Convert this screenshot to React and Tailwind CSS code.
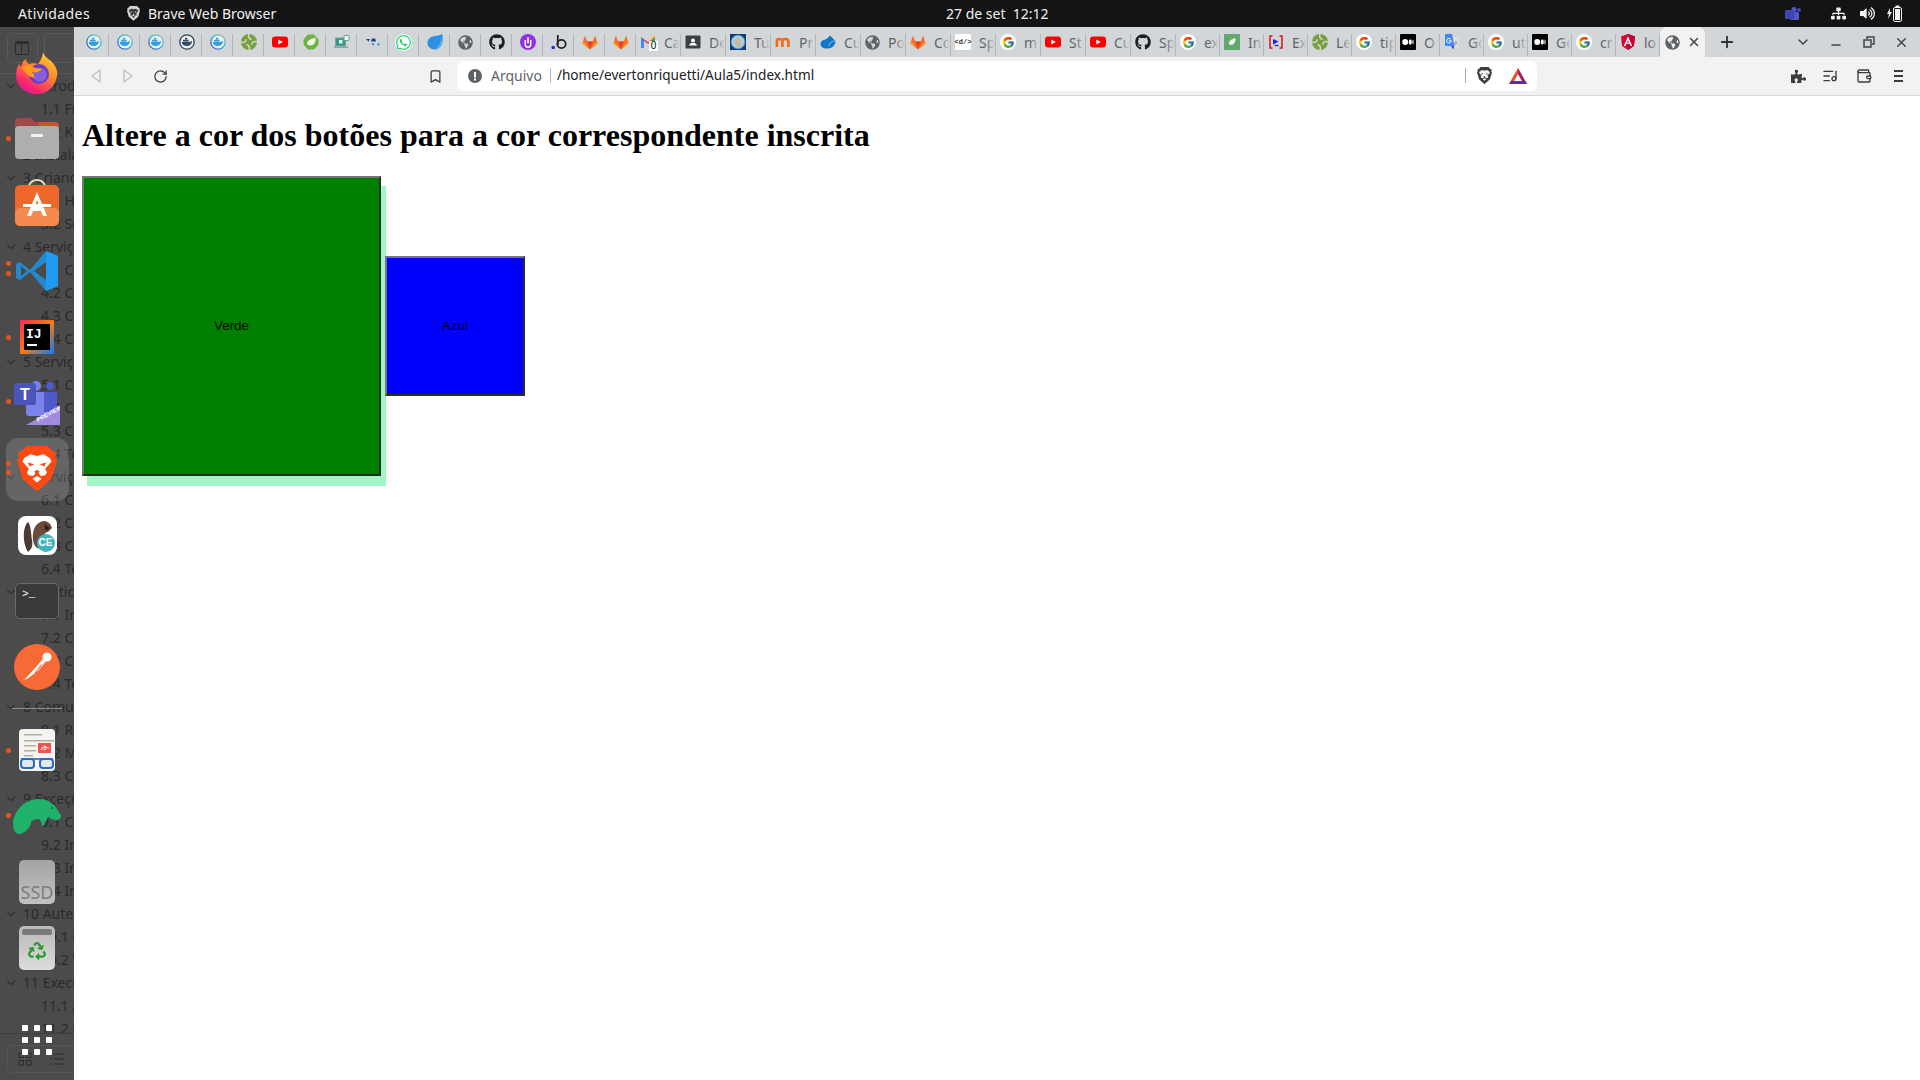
import { useId } from 'react';
import { RotateCw, Bookmark, X, Plus, ChevronDown, Minus, ListMusic, Wallet } from 'lucide-react';
import { FaWhatsapp, FaGithub, FaGlobeAmericas, FaPuzzlePiece, FaSitemap, FaVolumeUp, FaRecycle } from 'react-icons/fa';
import { FcGoogle } from 'react-icons/fc';

const UI_FONT = "font-['Noto_Sans',sans-serif]";

/* ---------- favicons ---------- */
function DockerFav({ dark }) {
  const id = useId();
  return (
    <svg width="16" height="16" viewBox="0 0 16 16">
      <defs>
        <linearGradient id={id} x1="0" y1="1" x2="1" y2="0">
          <stop offset="0" stopColor="#6a3fb5" />
          <stop offset="0.35" stopColor="#2f8fd8" />
          <stop offset="0.7" stopColor="#3cc6c8" />
          <stop offset="1" stopColor="#f3a95b" />
        </linearGradient>
      </defs>
      <circle cx="8" cy="8" r="7.2" fill="#e8eef3" stroke={dark ? '#2e4557' : `url(#${id})`} strokeWidth="1.3" />
      <path d="M2.6 8h8.2c.5-.9 1.3-1 2.4-.7-.5 3-2.6 4.7-5.4 4.7-2.9 0-4.7-1.6-5.2-4z" fill={dark ? '#334e63' : '#2f9fe6'} />
      <rect x="4" y="5.8" width="5.6" height="1.8" fill={dark ? '#334e63' : '#2f9fe6'} />
      <rect x="6" y="3.8" width="2.2" height="1.8" fill={dark ? '#334e63' : '#2f9fe6'} />
    </svg>
  );
}
function SpinFav() {
  return (
    <svg width="16" height="16" viewBox="0 0 16 16">
      <circle cx="8" cy="8" r="8" fill="#76a03a" />
      <path d="M8 0c-1 3 0 5 2.6 5.400M16 8c-3-1-5 0-5.400 2.600M8 16c1-3 0-5-2.600-5.400M0 8c3 1 5 0 5.400-2.600" stroke="#d3d6d9" strokeWidth="1.500" fill="none" />
    </svg>
  );
}
function YtFav() {
  return (
    <svg width="16" height="16" viewBox="0 0 16 16">
      <rect y="2.500" width="16" height="11" rx="3" fill="#f00" />
      <path d="M6.300 5.500L10.800 8l-4.500 2.500z" fill="#fff" />
    </svg>
  );
}
function SpringFav() {
  return (
    <svg width="16" height="16" viewBox="0 0 16 16">
      <path d="M5 1h6l4 4.500v5L11 15H5l-4-4.500v-5z" fill="#6db33f" stroke="#6db33f" strokeLinejoin="round" />
      <path d="M12.500 3.500c.6 4.500-1.500 8-5.500 8-1.300 0-2.300-.7-2.800-1.500-.7-3 2.800-4.800 8.300-6.500z" fill="#eef5e4" />
    </svg>
  );
}
function TealFav() {
  return (
    <svg width="16" height="16" viewBox="0 0 16 16">
      <rect x="1.500" y="4" width="10" height="8" fill="#2c9c82" stroke="#7c9ba6" />
      <rect x="5" y="6" width="3.500" height="3.500" fill="#e8f3f0" />
      <rect x="10" y="1.500" width="5" height="5" rx="1" fill="#f4f7f6" stroke="#55a593" />
      <rect x="0" y="12.500" width="14" height="1.500" fill="#8ba2ab" />
    </svg>
  );
}
function DotsFav() {
  return (
    <svg width="16" height="16" viewBox="0 0 16 16">
      <path d="M1 5h4l-1.500 2.500z" fill="#1d3f75" />
      <path d="M7 4.500h3l1 3H6z" fill="#1d3f75" />
      <path d="M6.500 9.500h3L8 11.500z" fill="#2a6fb8" />
      <path d="M12 9.500h3l-1 2h-1.500z" fill="#3e8ed8" />
    </svg>
  );
}
function DropFav() {
  return (
    <svg width="16" height="16" viewBox="0 0 16 16">
      <path d="M15.500 0C16 5 16 7 15 10c-1.200 3.600-4 5.500-7.500 5.500C3.500 15.500.5 12.500.5 9 .5 4.800 4 2.500 8 2c3-.4 5.500-.8 7.500-2z" fill="#2f8fe0" />
      <path d="M15.500 0C16 5 16 7 15 10c-1.200 3.600-4 5.500-7.500 5.500 4-2 6.500-6 8-15.500z" fill="#5fb4f0" />
    </svg>
  );
}
function UFav() {
  return (
    <svg width="16" height="16" viewBox="0 0 16 16">
      <circle cx="8" cy="8" r="8" fill="#9333e0" />
      <path d="M5.300 6v4.500a2.700 2.700 0 005.400 0V6" stroke="#fff" strokeWidth="1.500" fill="none" />
      <path d="M8 3.200v6" stroke="#fff" strokeWidth="1.500" />
    </svg>
  );
}
function BFav() {
  return (
    <svg width="16" height="16" viewBox="0 0 16 16">
      <circle cx="2.200" cy="13.500" r="1.800" fill="#1a2fd8" />
      <path d="M6.800 1v10" stroke="#222" strokeWidth="1.800" />
      <circle cx="10.500" cy="10" r="4.200" fill="none" stroke="#222" strokeWidth="1.800" />
    </svg>
  );
}
function GitlabFav() {
  return (
    <svg width="16" height="16" viewBox="0 0 16 16">
      <path d="M8 15.500L.4 9.500 2.800 1.500l2.400 6h5.600l2.400-6 2.400 8z" fill="#fc6d26" />
      <path d="M8 15.500L5.200 7.500h5.600z" fill="#e24329" />
      <path d="M8 15.500L.4 9.500l1.400-1.200z" fill="#fca326" />
      <path d="M8 15.500l7.600-6-1.400-1.200z" fill="#fca326" />
    </svg>
  );
}
function GmailFav() {
  return (
    <div className="relative w-4 h-4">
      <svg width="16" height="16" viewBox="0 0 16 16">
        <path d="M1 3v11h3V7l4 3 4-3v3h3V3l-7 5z" fill="#e8453c" />
        <path d="M1 3v11h3V6z" fill="#4285f4" />
        <path d="M12 6v4h3V3z" fill="#34a853" />
        <path d="M13 1.500L15 3l-3 3V3z" fill="#fbbc04" />
      </svg>
      <span className="absolute right-[-2px] bottom-[-1px] w-[9px] h-[10px] bg-white text-black text-[10px] leading-[10px] text-center font-['Liberation_Sans',sans-serif]">0</span>
    </div>
  );
}
function ContactFav() {
  return (
    <svg width="16" height="16" viewBox="0 0 16 16">
      <rect x="0.500" y="1.500" width="15" height="13" rx="1" fill="#3c4043" />
      <circle cx="8" cy="6.500" r="2" fill="#fff" />
      <path d="M4 11.500c.5-2 2-2.500 4-2.500s3.500.5 4 2.500z" fill="#fff" />
    </svg>
  );
}
function TuFav() {
  return (
    <svg width="16" height="16" viewBox="0 0 16 16">
      <rect width="16" height="16" fill="#0b3e78" />
      <circle cx="8" cy="8" r="6.800" fill="#b9c9d2" stroke="#4d9dd8" />
      <path d="M5.500 13V5.500c0-2 5-2 5 0V13z" fill="#c9b8a2" />
    </svg>
  );
}
function MFav() {
  return (
    <svg width="16" height="16" viewBox="0 0 16 16">
      <path d="M1.500 13V6.500c0-2 5.500-2 5.500 0V13m0-6.500c0-2 6-2 6 .500V13" stroke="#f26a14" strokeWidth="2.600" fill="none" transform="translate(.400 0)" />
    </svg>
  );
}
function CuFav() {
  return (
    <svg width="16" height="16" viewBox="0 0 16 16">
      <path d="M10 1.500L15.500 7 15 10c-2 3-4 4.500-8 4.500-4 0-6.500-2-6.500-4.500 0-2 1.500-3.500 3.500-4 2-.5 4-2 6-4.500z" fill="#0d78c8" />
      <path d="M15.500 7c-3 0-5 1-7 5" stroke="#d3d6d9" strokeWidth=".8" fill="none" />
    </svg>
  );
}
function CodeFav() {
  return (
    <div className="w-4 h-4 bg-white flex items-center justify-center text-[7px] leading-none text-[#333] font-['Liberation_Mono',monospace] font-bold">&lt;d/&gt;</div>
  );
}
function GoogleFav() {
  return (
    <div className="w-4 h-4 rounded-full bg-white flex items-center justify-center">
      <FcGoogle size={13} />
    </div>
  );
}
function LeafFav() {
  return (
    <svg width="16" height="16" viewBox="0 0 16 16">
      <rect width="16" height="16" fill="#5fa86f" />
      <path d="M11.500 4c.3 4-1.500 7-4.500 7-1 0-1.800-.5-2.200-1.200C4.500 7 7.500 5.200 11.500 4z" fill="#e9f3ea" />
    </svg>
  );
}
function ExFav() {
  return (
    <svg width="16" height="16" viewBox="0 0 16 16">
      <path d="M4.500 2H2v12h2.500M11.500 2H14v12h-2.500" stroke="#e0101a" strokeWidth="1.500" fill="none" />
      <path d="M5 5l5.500 2.500L5 10.500z" fill="#1524d8" />
      <path d="M6.500 11.500h4" stroke="#1524d8" strokeWidth="1.300" />
    </svg>
  );
}
function MediumFav() {
  return (
    <svg width="16" height="16" viewBox="0 0 16 16">
      <rect width="16" height="16" rx="1" fill="#000" />
      <ellipse cx="5.200" cy="8" rx="3" ry="3" fill="#fff" />
      <ellipse cx="10.300" cy="8" rx="1.500" ry="2.800" fill="#fff" />
      <ellipse cx="13" cy="8" rx=".6" ry="2.500" fill="#fff" />
    </svg>
  );
}
function TranslateFav() {
  return (
    <svg width="16" height="16" viewBox="0 0 16 16">
      <path d="M7 3h7.500v11H9z" fill="#d8dde2" />
      <path d="M9 7.500l1.500 4 1.500-4 .8 2h-2.500" stroke="#8a929a" strokeWidth=".8" fill="none" />
      <path d="M1 0h7l2.200 12H1z" fill="#4285f4" />
      <path d="M7 12l2.500 3.500.7-3.500z" fill="#2a56c6" />
      <path d="M6.800 5.300a2.300 2.300 0 10.500 1.500H5" stroke="#fff" strokeWidth="1" fill="none" />
    </svg>
  );
}
function AngularFav() {
  return (
    <svg width="16" height="16" viewBox="0 0 16 16">
      <path d="M8 0L1 2.500l1.100 9.500L8 16l5.900-4L15 2.500z" fill="#dd0031" />
      <path d="M8 0v16l5.900-4L15 2.500z" fill="#c3002f" />
      <path d="M8 2.200L3.800 12h1.600l.9-2.200h3.400l.9 2.200h1.600zM7 8.500L8 6l1 2.500z" fill="#fff" />
    </svg>
  );
}
const GlobeFav = () => <FaGlobeAmericas size={15} color="#5f6368" />;
const WaFav = () => <FaWhatsapp size={17} color="#25d366" className="bg-white rounded-full" />;
const GhFav = () => <FaGithub size={16} color="#1b1f23" />;

const iconTabs = [
  <DockerFav />, <DockerFav />, <DockerFav />, <DockerFav dark />, <DockerFav />, <SpinFav />, <YtFav />, <SpringFav />, <TealFav />,
  <DotsFav />, <WaFav />, <DropFav />, <GlobeFav />, <GhFav />, <UFav />, <BFav />, <GitlabFav />, <GitlabFav />,
];

const textTabs = [
  [<GmailFav />, 'Ca'], [<ContactFav />, 'De'], [<TuFav />, 'Tu'], [<MFav />, 'Pr'], [<CuFav />, 'Cu'], [<GlobeFav />, 'Po'],
  [<GitlabFav />, 'Co'], [<CodeFav />, 'Sp'], [<GoogleFav />, 'm'], [<YtFav />, 'St'], [<YtFav />, 'Cu'], [<GhFav />, 'Sp'],
  [<GoogleFav />, 'ex'], [<LeafFav />, 'In'], [<ExFav />, 'Ex'], [<SpinFav />, 'Le'], [<GoogleFav />, 'tip'], [<MediumFav />, 'O'],
  [<TranslateFav />, 'Go'], [<GoogleFav />, 'ut'], [<MediumFav />, 'Ge'], [<GoogleFav />, 'cr'], [<AngularFav />, 'lo'],
];

/* ---------- shell icons ---------- */
function BraveLogo({ size = 44, shield = '#fb4a12', face = '#fff' }) {
  return (
    <svg width={size} height={size * 1.14} viewBox="0 0 44 50">
      <path d="M10 0h24l4 5 5 2-1 6 2 3-6 20-8 7-8 7-8-7-8-7-6-20 2-3-1-6 5-2z" fill={shield} />
      <path d="M8 13l7-4 7 2 7-2 7 4 2 4-7 8 2 4-2 3-5 1-2-3h-4l-2 3-5-1-2-3 2-4-7-8z" fill={face} />
      <path d="M22 33l5 3-5 4-5-4z" fill={face} />
      <path d="M12 18l7 2-5 2.500zM32 18l-7 2 5 2.500z" fill={shield} />
      <path d="M19 28l3-2 3 2-3 4z" fill={shield} />
    </svg>
  );
}
function Firefox() {
  const id = useId();
  return (
    <svg width="42" height="42" viewBox="0 0 42 42">
      <defs>
        <linearGradient id={id} x1="0.8" y1="0" x2="0.2" y2="1">
          <stop offset="0" stopColor="#ffd53a" />
          <stop offset="0.4" stopColor="#ff8a2a" />
          <stop offset="0.8" stopColor="#f6266f" />
          <stop offset="1" stopColor="#e2109a" />
        </linearGradient>
      </defs>
      <path d="M27 0c1 4 4 6 8 9 5 5 7 10 6 15-2 11-10 18-20 18C9 42 0 34 0 23c0-4 1-8 3-11 1 1 1 2 2 3 1-4 2-6 5-8 0 2 1 4 3 5 3-1 6-1 9 0 3-4 5-8 5-12z" fill={`url(#${id})`} />
      <circle cx="23" cy="22" r="10" fill="#6a3bc4" />
      <circle cx="24" cy="23" r="7" fill="#8a5ed8" />
      <path d="M5 15c4-2 8-2 12 0 4 2 7 1 9 2-3 3-6 4-10 3 2 2 3 4 2 6-4-1-9-5-13-11z" fill="#ff9a1f" />
    </svg>
  );
}
function FilesIcon() {
  return (
    <svg width="44" height="42" viewBox="0 0 44 42" className="-mt-[2px]">
      <path d="M0 5a4 4 0 014-4h12l4 4h20a4 4 0 014 4v10H0z" fill="#a0484a" />
      <path d="M24 5h16a4 4 0 014 4v10H24z" fill="#c0582a" />
      <rect y="9" width="44" height="33" rx="4" fill="#aeaeae" />
      <rect x="16" y="17" width="12" height="3" rx="1" fill="#f2f2f2" />
    </svg>
  );
}
function SoftwareIcon() {
  return (
    <svg width="44" height="48" viewBox="0 0 44 48" className="-mt-[6px]">
      <path d="M13 12c0-6 4-10 9-10s9 4 9 10" stroke="#e8d6b8" strokeWidth="2" fill="none" />
      <rect y="7" width="44" height="41" rx="5" fill="#f0672c" />
      <rect y="30" width="44" height="18" rx="5" fill="#f58a4e" />
      <path d="M22 14L12 38h4l2-5h8l2 5h4zM19.500 29l2.500-7 2.500 7z" fill="#fff" />
      <path d="M8 26h28v3H8z" fill="#fff" />
    </svg>
  );
}
function VsCode() {
  return (
    <svg width="42" height="42" viewBox="0 0 42 42">
      <path d="M30 1L14 20 4 12 0 14v14l4 2 10-8 16 19 12-5V6z" fill="#2489ca" />
      <path d="M30 1l12 5v30l-12 5z" fill="#1f9cf0" />
      <path d="M30 12L18 21l12 9z" fill="#4a4a4a" />
      <path d="M5 16l6 5-6 5z" fill="#4a4a4a" />
    </svg>
  );
}
function IntelliJ() {
  const id = useId();
  return (
    <svg width="34" height="34" viewBox="0 0 34 34">
      <defs>
        <linearGradient id={id} x1="0" y1="0" x2="1" y2="1">
          <stop offset="0" stopColor="#fe2857" />
          <stop offset="0.5" stopColor="#f97a12" />
          <stop offset="1" stopColor="#087cfa" />
        </linearGradient>
      </defs>
      <rect width="34" height="34" fill={`url(#${id})`} />
      <rect x="4" y="4" width="26" height="26" fill="#000" />
      <text x="6" y="18" fontSize="13" fontWeight="700" fill="#fff" fontFamily="Liberation Mono, monospace">IJ</text>
      <rect x="7" y="24" width="10" height="2" fill="#fff" />
    </svg>
  );
}
function Teams() {
  return (
    <svg width="46" height="44" viewBox="0 0 46 44">
      <circle cx="22" cy="5" r="5" fill="#7b83eb" />
      <circle cx="36" cy="5" r="4" fill="#5059c9" />
      <rect x="12" y="11" width="24" height="24" rx="3" fill="#7b83eb" />
      <path d="M30 11h13v14a6 6 0 01-6 6h-7z" fill="#5059c9" />
      <rect y="2" width="22" height="22" rx="2" fill="#4b53bc" />
      <text x="11" y="19" textAnchor="middle" fontSize="16" fontWeight="700" fill="#fff" fontFamily="Liberation Sans, sans-serif">T</text>
      <path d="M12 44l34-19v19z" fill="#a28ae0" />
      <text x="24" y="41" fontSize="6" fontWeight="700" fill="#fff" fontFamily="Liberation Sans, sans-serif" transform="rotate(-29 24 41)">PREVIEW</text>
    </svg>
  );
}
function Beaver() {
  return (
    <div className="relative w-[39px] h-[39px] rounded-[8px] bg-white overflow-hidden">
      <svg width="39" height="39" viewBox="0 0 39 39">
        <path d="M10 36C4 26 5 10 10 6c3 3 3 12 4 18 1 5 0 9-4 12z" fill="#4a3a33" />
        <path d="M15 24c-1-9 2-18 11-19 5 0 7 4 8 7l-4 4c-3 0-4 3-5 7l-1 9c-5 2-8-2-9-8z" fill="#6b4a3a" />
        <path d="M26 8l6 4-4 3z" fill="#222" />
      </svg>
      <span className="absolute right-[2px] bottom-[3px] w-[18px] h-[18px] rounded-full bg-[#3fb6bd] text-white text-[10px] leading-[18px] text-center font-bold font-['Liberation_Sans',sans-serif]">CE</span>
    </div>
  );
}
function Terminal() {
  return (
    <div className="w-[44px] h-[36px] rounded-[5px] bg-[#3a3a3a] border border-[#6a6a6a] text-white text-[11px] leading-none pt-[5px] pl-[6px] font-['Liberation_Mono',monospace]">
      &gt;_
    </div>
  );
}
function Postman() {
  return (
    <svg width="46" height="46" viewBox="0 0 46 46">
      <circle cx="23" cy="23" r="23" fill="#f76935" />
      <path d="M8 36l3-1 11-12 7-8 3 2-7 9-12 9z" fill="#fff" />
      <circle cx="33" cy="13" r="4.500" fill="#fff" />
      <path d="M18 26l5-6 M21 29l6-7 M24 25l4-5" stroke="#f76935" strokeWidth="1" />
    </svg>
  );
}
function DocViewer() {
  return (
    <div className="relative w-[36px] h-[42px] rounded-[4px] bg-[#f4f4f4] overflow-hidden">
      <svg width="36" height="42" viewBox="0 0 36 42">
        <path d="M5 5h18v1.500H5zM5 11h30v1.500H5zM5 16h12v1.500H5zM5 21h12v1.500H5zM5 26h9v1.500H5z" fill="#b8ad98" />
        <rect x="19" y="14" width="13" height="10" fill="#ef5350" />
        <path d="M22 21c2-4 5-5 5-2s-3 2-2 0 4 0 5 0" stroke="#fff" fill="none" />
        <path d="M2 30h32" stroke="#2a5ca8" strokeWidth="1.500" />
        <rect x="2" y="30" width="13" height="9" rx="3" fill="#dfe8f4" stroke="#2a6ac0" strokeWidth="2" />
        <rect x="21" y="30" width="13" height="9" rx="3" fill="#dfe8f4" stroke="#2a6ac0" strokeWidth="2" />
      </svg>
    </div>
  );
}
function Manatee() {
  return (
    <svg width="49" height="35" viewBox="0 0 49 35">
      <path d="M0 24C1 12 11 1 24 0c11-1 19 6 22 14 3 2 3 6-1 7-4 1-8-2-10-3-2 4-4 8-6 10 0-4-1-7-3-8-4 0-6 1-8 3 1 3-6 12-12 12-4 0-6-5-6-11z" fill="#1fb26b" />
      <circle cx="39" cy="9" r="1" fill="#0b5a36" />
    </svg>
  );
}
function Ssd() {
  return (
    <div className="w-[36px] h-[44px] rounded-[5px] bg-gradient-to-b from-[#a3a3a3] to-[#c2c2c2] flex items-end justify-center pb-[1px]">
      <span className="text-[18px] leading-[22px] text-[#7d7d7d] font-['Noto_Sans',sans-serif]">SSD</span>
    </div>
  );
}
function Trash() {
  return (
    <div className="w-[36px] h-[44px] rounded-[5px] bg-gradient-to-b from-[#b8b8b8] to-[#dcdcdc] flex flex-col items-center pt-[3px]">
      <div className="w-[30px] h-[6px] rounded-[2px] bg-[#7a7a7a]" />
      <FaRecycle size={18} color="#2d9a2d" className="mt-[7px]" />
    </div>
  );
}
function AppGrid() {
  return (
    <div className="grid grid-cols-3 gap-x-[6px] gap-y-[6px]">
      {[0, 1, 2, 3, 4, 5, 6, 7, 8].map((i) => (
        <span key={i} className="w-[6px] h-[6px] rounded-[1px] bg-white" />
      ))}
    </div>
  );
}

/* ---------- dock ---------- */
function Dot({ offset }) {
  return <span className={`absolute left-[6px] w-[5px] h-[5px] rounded-full bg-[#e95420] ${offset}`} />;
}
function Slot({ children, dots }) {
  return (
    <div className="relative w-[74px] h-[66px] flex items-center justify-center shrink-0">
      {children}
      {dots}
    </div>
  );
}

// the reader app that sits behind the translucent dock
const outline = [
  ['h', '1 Introdução'], ['s', '1.1 Frontend'], ['s', '1.2 Kubernetes'], ['n', '2 Instalação'], ['h', '3 Criando'], ['s', '3.1 Hello'], ['s', '3.2 Serviço'],
  ['h', '4 Serviços'], ['s', '4.1 Criar'], ['s', '4.2 Cadastro'], ['s', '4.3 Cadastro'], ['s', '4.4 Cadastro'],
  ['h', '5 Serviços'], ['s', '5.1 Criar'], ['s', '5.2 Cadastro'], ['s', '5.3 Cadastro'], ['s', '5.4 Testes'],
  ['h', '6 Serviços'], ['s', '6.1 Criar'], ['s', '6.2 Cadastro'], ['s', '6.3 Cadastro'], ['s', '6.4 Testes'],
  ['h', '7 Políticas'], ['s', '7.1 Instalar'], ['s', '7.2 Cadastro'], ['s', '7.3 Cadastro'], ['s', '7.4 Testes'],
  ['h', '8 Comunicação'], ['s', '8.1 Rotas'], ['s', '8.2 Mensagens'], ['s', '8.3 Consumo'],
  ['h', '9 Exceções'], ['s', '9.1 Criar'], ['s', '9.2 Interface'], ['s', '9.3 Interface'], ['s', '9.4 Interface'],
  ['h', '10 Autenticação'], ['s', '10.1 Criar'], ['s', '10.2 Validar'],
  ['h', '11 Execução'], ['s', '11.1 Ambiente'], ['s', '11.2 Cadastro'],
];

function Dock() {
  return (
    <aside className={`relative w-[74px] shrink-0 bg-[#4b4b4b] overflow-hidden text-[#2a2a2a] text-[14px] ${UI_FONT}`}>
      <div className="h-[47px] border-b border-[#555] flex pt-[6px] pl-[7px] gap-[6px]">
        <div className="w-[35px] h-[30px] rounded-[5px] border border-[#585858] flex items-center justify-center">
          <svg width="16" height="16" viewBox="0 0 16 16"><rect x="1" y="1" width="14" height="14" rx="2" fill="#2e2e2e" /><rect x="8" y="4" width="6" height="10" fill="#4b4b4b" /><rect x="2" y="4" width="5" height="10" fill="#4b4b4b" /></svg>
        </div>
        <div className="w-[35px] h-[30px] rounded-[5px] border border-[#585858]" />
      </div>
      {outline.map(([kind, label], i) => (
        <div key={i} className="h-[23px] flex items-center whitespace-nowrap">
          {kind === 'h' && <ChevronDown size={14} color="#333" className="ml-[4px] mr-[5px] shrink-0" />}
          <span className={kind === 's' ? 'ml-[41px]' : kind === 'n' ? 'ml-[23px]' : ''}>{label}</span>
        </div>
      ))}
      <div className="absolute left-0 right-0 bottom-0 h-[47px] border-t border-[#3e3e3e] bg-[#4b4b4b] pt-[11px] pl-[7px]">
        <div className="flex w-[80px] h-[28px] rounded-[6px] border border-[#555] items-center">
          <svg width="14" height="14" viewBox="0 0 14 14" className="ml-[10px]" stroke="#2d2d2d" fill="none"><rect x="1" y="1" width="4.500" height="4.500" /><rect x="8.500" y="1" width="4.500" height="4.500" /><rect x="1" y="8.500" width="4.500" height="4.500" /><rect x="8.500" y="8.500" width="4.500" height="4.500" /></svg>
          <svg width="14" height="14" viewBox="0 0 14 14" className="ml-[18px]" stroke="#2d2d2d"><path d="M0 2h2M4 2h10M0 7h2M4 7h10M0 12h2M4 12h10" /></svg>
        </div>
      </div>

      <nav className="absolute inset-0 flex flex-col items-center pt-[13px] pb-[7px]">
        <Slot><Firefox /></Slot>
        <Slot dots={<Dot offset="top-[30px]" />}><FilesIcon /></Slot>
        <Slot><SoftwareIcon /></Slot>
        <Slot dots={<><Dot offset="top-[23px]" /><Dot offset="top-[33px]" /></>}><VsCode /></Slot>
        <Slot dots={<Dot offset="top-[31px]" />}><IntelliJ /></Slot>
        <Slot dots={<Dot offset="top-[29px]" />}><Teams /></Slot>
        <Slot dots={<><Dot offset="top-[25px]" /><Dot offset="top-[34px]" /></>}>
          <span className="absolute w-[63px] h-[63px] rounded-[12px] bg-white/15" />
          <span className="relative"><BraveLogo size={40} /></span>
        </Slot>
        <Slot><Beaver /></Slot>
        <Slot><Terminal /></Slot>
        <Slot><Postman /></Slot>
        <div className="w-[50px] h-px bg-[#8c8c8c] my-[8px] shrink-0" />
        <Slot dots={<Dot offset="top-[31px]" />}><DocViewer /></Slot>
        <Slot dots={<Dot offset="top-[30px]" />}><Manatee /></Slot>
        <Slot><Ssd /></Slot>
        <Slot><Trash /></Slot>
        <div className="mt-auto"><Slot><AppGrid /></Slot></div>
      </nav>
    </aside>
  );
}

/* ---------- browser chrome ---------- */
function TabStrip() {
  return (
    <div className={`h-[30px] bg-[#d3d6d9] flex pl-[4px] shrink-0 ${UI_FONT}`}>
      {iconTabs.map((icon, i) => (
        <div key={i} className="w-[31px] flex items-center justify-center relative">
          {icon}
          <span className="absolute right-0 top-[7px] bottom-[1px] w-px bg-[#b4b7ba]" />
        </div>
      ))}
      {textTabs.map(([icon, label], i) => (
        <div key={i} className={`${i < 12 ? 'w-[45px]' : 'w-[44px]'} relative flex items-center pl-[4px] overflow-hidden`}>
          <span className="shrink-0">{icon}</span>
          <span className="ml-[8px] text-[14px] text-[#606367] whitespace-nowrap">{label}</span>
          <span className="absolute right-[1px] top-0 bottom-0 w-[10px] bg-gradient-to-r from-transparent to-[#d3d6d9]" />
          <span className="absolute right-0 top-[7px] bottom-[1px] w-px bg-[#b4b7ba]" />
        </div>
      ))}
      <div className="w-[45px] bg-[#f2f2f2] rounded-t-[7px] flex items-center pl-[5px]">
        <GlobeFav />
        <X size={14} strokeWidth={2.5} color="#444" className="ml-[7px]" />
      </div>
      <div className="w-[44px] flex items-center justify-center">
        <Plus size={18} strokeWidth={2.5} color="#333" />
      </div>
      <div className="flex-1" />
      <div className="flex pr-[2px] text-[#444]">
        <div className="w-[33px] flex items-center justify-center"><ChevronDown size={16} strokeWidth={2.2} /></div>
        <div className="w-[33px] flex items-center justify-center pt-[6px]"><Minus size={14} strokeWidth={2.2} /></div>
        <div className="w-[33px] flex items-center justify-center">
          <svg width="12" height="12" viewBox="0 0 12 12" fill="none" stroke="#444" strokeWidth="1.500"><rect x="1" y="4" width="7" height="7" /><path d="M4 3V1h7v7H9" /></svg>
        </div>
        <div className="w-[33px] flex items-center justify-center"><X size={15} strokeWidth={2.2} /></div>
      </div>
    </div>
  );
}

function ToolBar() {
  return (
    <div className={`h-[39px] bg-[#f2f2f2] border-b border-[#d8d8d8] flex items-start pt-[4px] shrink-0 ${UI_FONT}`}>
      <div className="flex items-center h-[30px] ml-[6px]">
        <div className="w-8 flex justify-center">
          <svg width="12" height="16" viewBox="0 0 12 16" fill="none" stroke="#c2c4c6" strokeWidth="1.500" strokeLinejoin="round"><path d="M10 2v12L2 8z" /></svg>
        </div>
        <div className="w-8 flex justify-center">
          <svg width="12" height="16" viewBox="0 0 12 16" fill="none" stroke="#c2c4c6" strokeWidth="1.500" strokeLinejoin="round"><path d="M2 2v12l8-6z" /></svg>
        </div>
        <div className="w-8 flex justify-center"><RotateCw size={15} strokeWidth={2} color="#3c3c3c" /></div>
        <div className="w-8 flex justify-center ml-[243px]"><Bookmark size={15} strokeWidth={2} color="#3c3c3c" /></div>
      </div>
      <div className="ml-[6px] w-[1080px] h-[30px] bg-white rounded-[6px] flex items-center pl-[11px] pb-[1px] text-[14px]">
        <svg width="14" height="14" viewBox="0 0 14 14"><circle cx="7" cy="7" r="7" fill="#5f6368" /><rect x="6" y="3" width="2" height="5.500" fill="#fff" /><rect x="6" y="9.500" width="2" height="2" fill="#fff" /></svg>
        <span className="ml-[9px] text-[#5f6368]">Arquivo</span>
        <span className="ml-[8px] w-px h-[15px] bg-[#b5b5b5]" />
        <span className="ml-[6px] text-[13.6px] text-[#202124]">/home/evertonriquetti/Aula5/index.html</span>
        <span className="ml-auto w-px h-[15px] bg-[#a8a8a8]" />
        <span className="w-[36px] flex justify-center"><BraveLogo size={15} shield="#3c4043" face="#f4f4f4" /></span>
        <span className="w-[32px] flex justify-center mr-[3px]">
          <svg width="18" height="16" viewBox="0 0 18 16">
            <path d="M9 0L0 16h3.500L9 6z" fill="#ef4a26" />
            <path d="M9 0l9 16h-3.500L9 6z" fill="#9e1f63" />
            <path d="M0 16h18l-2-3H2z" fill="#662d91" />
          </svg>
        </span>
      </div>
      <div className="flex-1 flex items-center justify-end h-[30px] pr-[5px] text-[#3c3c3c]">
        <div className="w-[34px] flex justify-center pl-[4px]"><FaPuzzlePiece size={15} /></div>
        <div className="w-[34px] flex justify-center"><ListMusic size={16} strokeWidth={2} /></div>
        <div className="w-[34px] flex justify-center"><Wallet size={16} strokeWidth={2} /></div>
        <div className="w-[34px] flex flex-col items-center gap-[3px]">
          <span className="w-[9px] h-[2px] bg-[#3c3c3c]" />
          <span className="w-[9px] h-[2px] bg-[#3c3c3c]" />
          <span className="w-[9px] h-[2px] bg-[#3c3c3c]" />
        </div>
      </div>
    </div>
  );
}

function TopBar() {
  return (
    <header className={`h-[27px] bg-[#141414] text-[#f0f0f0] text-[14px] relative flex items-center shrink-0 ${UI_FONT}`}>
      <span className="ml-[18px] tracking-[0.4px]">Atividades</span>
      <span className="ml-[37px]"><BraveLogo size={13} shield="#d4d4d4" face="#3a3a3a" /></span>
      <span className="ml-[8px]">Brave Web Browser</span>
      <span className="absolute left-[946px]">27 de set&nbsp; 12:12</span>
      <div className="ml-auto flex items-center pr-[17px]">
        <svg width="16" height="14" viewBox="0 0 16 14" className="mr-[30px]"><circle cx="9" cy="2.500" r="2.500" fill="#5059c9" /><circle cx="14" cy="3" r="2" fill="#4048b0" /><rect x="5" y="5" width="9" height="8" rx="1.500" fill="#5059c9" /><rect y="3" width="9" height="9" rx="1" fill="#3d45b0" /></svg>
        <FaSitemap size={15} color="#f2f2f2" className="mr-[14px]" />
        <FaVolumeUp size={15} color="#f2f2f2" className="mr-[12px]" />
        <svg width="16" height="17" viewBox="0 0 16 17">
          <path d="M3 3L0 9h2l-1 5 4-7H3z" fill="#f2f2f2" />
          <rect x="6.500" y="2.500" width="8" height="14" rx="1.500" fill="none" stroke="#f2f2f2" />
          <rect x="8" y="4" width="5" height="11" fill="#f2f2f2" />
          <rect x="8.500" y="0.500" width="4" height="2" fill="#f2f2f2" />
        </svg>
      </div>
    </header>
  );
}

function ColorButton({ label, className }) {
  return (
    <button className={`shrink-0 border-2 border-t-[#767676] border-l-[#767676] border-r-[#2b2b2b] border-b-[#2b2b2b] text-black text-[13.33px] font-['Liberation_Sans',sans-serif] ${className}`}>
      {label}
    </button>
  );
}

export default function App() {
  return (
    <div className="w-screen h-screen flex flex-col overflow-hidden bg-white">
      <TopBar />
      <div className="flex-1 flex min-h-0">
        <Dock />
        <main className="flex-1 flex flex-col min-w-0">
          <TabStrip />
          <ToolBar />
          <div className="pl-[8px] pt-[21px] font-['Liberation_Serif',serif] text-black">
            <h1 className="text-[32px] font-bold leading-[37px]">Altere a cor dos botões para a cor correspondente inscrita</h1>
            <div className="flex items-center gap-[4px] mt-[22px]">
              <ColorButton label="Verde" className="w-[299px] h-[300px] bg-[#008000] shadow-[5px_10px_0_#a1f7c6]" />
              <ColorButton label="Azul" className="w-[140px] h-[140px] bg-[#0000ff]" />
            </div>
          </div>
        </main>
      </div>
    </div>
  );
}
